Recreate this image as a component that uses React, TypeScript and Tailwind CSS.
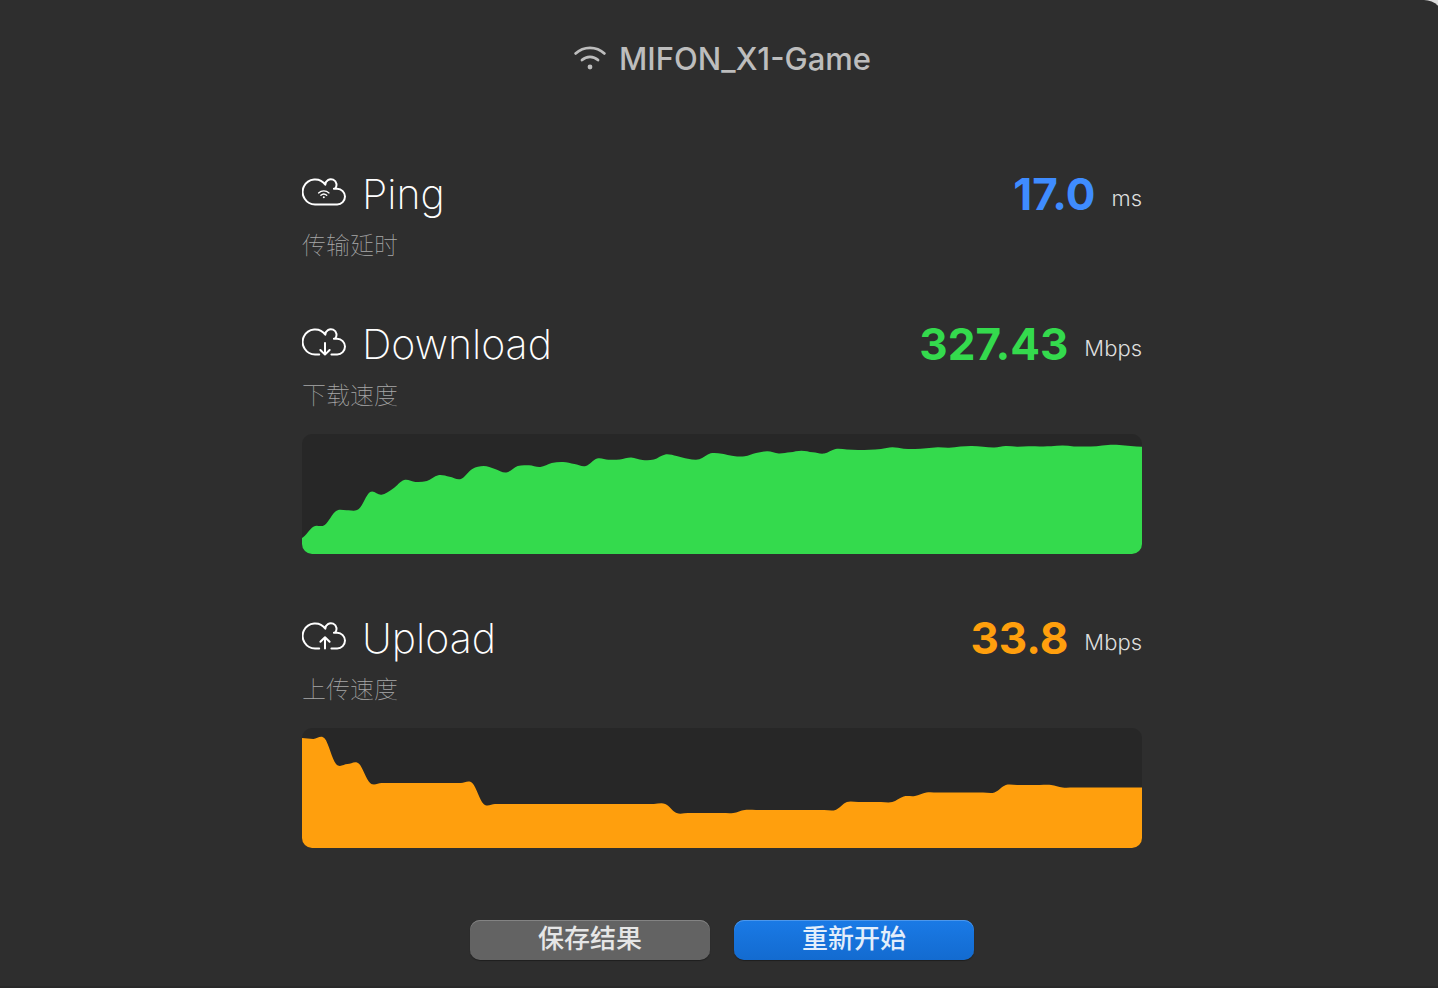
import type { ReactNode } from "react"

interface SpeedSectionProps {
  title: string
  subtitle: string
  value: string
  unit: string
  valueClass: string
  icon: ReactNode
  children?: ReactNode
}

interface AreaChartProps {
  label: string
  data: number[]
  fillClass: string
}

const CHART_WIDTH = 840
const CHART_HEIGHT = 120

// Distance from the top of the chart, one sample per tick
const downloadSamples = [
  104, 92.7, 91, 77, 76.3, 75, 58, 60.7, 54.7, 46, 48, 47, 41.3, 42.7, 45, 35, 32, 35, 38.5, 32, 31.3, 33, 29, 28, 30,
  32, 24.5, 25.7, 25.5, 23.5, 26, 25.5, 20.5, 22, 24.7, 25.3, 19.3, 19.7, 22, 22.3, 19, 17.3, 19.5, 18.3, 16.7, 18.3,
  19.5, 15, 15.4, 16, 15.7, 15, 13.3, 14.7, 15, 14.3, 13.3, 13.7, 12.5, 12, 12.8, 13.5, 12, 12.7, 12.3, 12.4, 12.3,
  11.6, 12.4, 12.4, 12.2, 11, 11, 12, 12.8,
]

const repeat = (value: number, count: number): number[] => Array(count).fill(value)

const uploadSamples = [
  10, 11, 10.5, 36, 36, 35.5,
  ...repeat(55, 10),
  ...repeat(76, 17),
  ...repeat(85, 6),
  ...repeat(82, 9),
  ...repeat(74, 5),
  68.5, 68,
  ...repeat(64.5, 7),
  ...repeat(57, 5),
  ...repeat(59.5, 8),
]

// Smooth the samples with a Catmull-Rom spline and close the shape at the bottom
const buildAreaPath = (data: number[]) => {
  const step = CHART_WIDTH / (data.length - 1)
  const at = (i: number) => data[Math.min(Math.max(i, 0), data.length - 1)]
  let path = `M0 ${CHART_HEIGHT}L0 ${data[0]}`

  for (let i = 0; i < data.length - 1; i++) {
    const c1 = at(i) + (at(i + 1) - at(i - 1)) / 6
    const c2 = at(i + 1) - (at(i + 2) - at(i)) / 6
    path += `C${(i + 1 / 3) * step} ${c1} ${(i + 2 / 3) * step} ${c2} ${(i + 1) * step} ${at(i + 1)}`
  }

  return `${path}L${CHART_WIDTH} ${CHART_HEIGHT}Z`
}

function AreaChart({ label, data, fillClass }: AreaChartProps) {
  return (
    <div className="mt-[22px] mb-0.5 h-[120px] overflow-hidden rounded-[10px] bg-[#272727]">
      <svg
        role="img"
        aria-label={label}
        viewBox={`0 0 ${CHART_WIDTH} ${CHART_HEIGHT}`}
        preserveAspectRatio="none"
        className="block h-full w-full"
      >
        <path d={buildAreaPath(data)} className={fillClass} />
      </svg>
    </div>
  )
}

function CloudIcon({ open = false, children }: { open?: boolean; children: ReactNode }) {
  return (
    <svg
      viewBox="0 0 44 28"
      aria-hidden="true"
      className="h-7 w-11 shrink-0 fill-none stroke-white stroke-2"
      strokeLinecap="round"
      strokeLinejoin="round"
    >
      {open ? (
        <path d="M17.2 26.4H13.6A12.5 12.5 0 1 1 23.3 6.6A5.6 5.6 0 1 1 32.8 10.8M31.9 10.8H35.2A7.8 7.8 0 0 1 35.2 26.4H29.4" />
      ) : (
        <path d="M35.2 26.4H13.6A12.5 12.5 0 1 1 23.3 6.6A5.6 5.6 0 1 1 32.8 10.8M31.9 10.8H35.2A7.8 7.8 0 0 1 35.2 26.4" />
      )}
      {children}
    </svg>
  )
}

function WifiIcon() {
  return (
    <svg viewBox="0 0 34 28" aria-hidden="true" className="h-7 w-[34px] fill-none stroke-[#bdbdbd]" strokeLinecap="round">
      <path d="M2.6 8.4C10.6 0.9 23.4 0.9 31.4 8.4" strokeWidth="2.8" />
      <path d="M9 15C13.6 10.8 20.4 10.8 25 15" strokeWidth="2.8" />
      <circle cx="17" cy="22" r="2.4" className="fill-[#bdbdbd] stroke-none" />
    </svg>
  )
}

function SpeedSection({ title, subtitle, value, unit, valueClass, icon, children }: SpeedSectionProps) {
  return (
    <section>
      <div className="flex h-[52px] items-center justify-between">
        <div className="flex items-center gap-4">
          <div className="pb-1">{icon}</div>
          <h2 className="text-[41px] leading-[52px] font-extralight text-white">{title}</h2>
        </div>
        <p className="flex items-center gap-4">
          <span className={`text-[44px] leading-[52px] font-bold ${valueClass}`}>{value}</span>
          <span className="pt-2 text-[22px] leading-8 font-light text-[#dedede]">{unit}</span>
        </p>
      </div>
      <p className="mt-2.5 text-2xl font-thin text-[#a8a8a8]">{subtitle}</p>
      {children}
    </section>
  )
}

export default function App() {
  return (
    <div className="min-h-screen overflow-hidden bg-[#dcdcdc] font-['Inter','Noto_Sans_CJK_SC',sans-serif]">
      {/* The window runs slightly past the right edge of the viewport */}
      <main className="-mr-1.5 flex min-h-screen flex-col items-center rounded-tr-[20px] border-b-2 border-[#292929] bg-[#2e2e2e] px-6 pt-[35px] pb-[26px]">
        <header className="flex items-center gap-3">
          <WifiIcon />
          <h1 className="text-[31px] leading-[48px] font-medium text-[#bdbdbd]">MIFON_X1-Game</h1>
        </header>

        <div className="mt-[85px] flex w-full max-w-[840px] flex-col gap-14">
          <SpeedSection
            title="Ping"
            subtitle="传输延时"
            value="17.0"
            unit="ms"
            valueClass="text-[#3f8cff]"
            icon={
              <CloudIcon>
                <path d="M16.6 14.9C19.6 12.2 24 12.2 27 14.9" strokeWidth="1.4" />
                <path d="M18.9 17.3C20.6 15.7 23 15.7 24.7 17.3" strokeWidth="1.4" />
                <circle cx="21.8" cy="19.3" r="1" className="fill-white stroke-none" />
              </CloudIcon>
            }
          />

          <SpeedSection
            title="Download"
            subtitle="下载速度"
            value="327.43"
            unit="Mbps"
            valueClass="text-[#34da4d]"
            icon={
              <CloudIcon open>
                <path d="M23 15V26.4M18.4 22L23 26.6L27.6 22" />
              </CloudIcon>
            }
          >
            <AreaChart label="下载速度" data={downloadSamples} fillClass="fill-[#34da4d]" />
          </SpeedSection>

          <SpeedSection
            title="Upload"
            subtitle="上传速度"
            value="33.8"
            unit="Mbps"
            valueClass="text-[#ff9f0d]"
            icon={
              <CloudIcon open>
                <path d="M23 26.6V15.4M18.4 19.8L23 15.2L27.6 19.8" />
              </CloudIcon>
            }
          >
            <AreaChart label="上传速度" data={uploadSamples} fillClass="fill-[#ff9f0d]" />
          </SpeedSection>
        </div>

        <div className="mt-[70px] flex gap-6">
          <button
            type="button"
            className="h-10 w-60 rounded-[10px] bg-[#636363] pb-0.5 text-[26px] leading-9 font-medium text-[#e6e6e6] shadow-[inset_0_1px_0_#838383,0_1px_1px_#1f1f1f]"
          >
            保存结果
          </button>
          <button
            type="button"
            className="h-10 w-60 rounded-[10px] bg-linear-to-b from-[#1a7ae6] to-[#136bd0] pb-0.5 text-[26px] leading-9 font-medium text-[#e3eefb] shadow-[inset_0_1px_0_#4c97ec,0_1px_1px_#1f1f1f]"
          >
            重新开始
          </button>
        </div>
      </main>
    </div>
  )
}
